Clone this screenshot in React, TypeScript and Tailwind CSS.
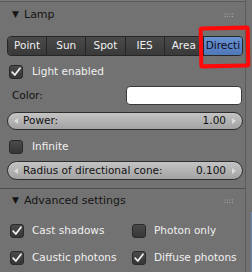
import React from "react";

const font = { fontFamily: '"DejaVu Sans", "Liberation Sans", sans-serif' };

function Check({ checked }: { checked: boolean }) {
  return (
    <div className="w-[14px] h-[14px] rounded-[3px] border border-[#2a2a2a] bg-gradient-to-b from-[#4a4a4a] to-[#363636] flex items-center justify-center shrink-0">
      {checked && (
        <svg width="12" height="12" viewBox="0 0 12 12">
          <path d="M2.2 6.2 L4.8 9 L10 2.2" stroke="#f0f0f0" strokeWidth="1.8" fill="none" strokeLinecap="round" strokeLinejoin="round" />
        </svg>
      )}
    </div>
  );
}

function Grip() {
  return (
    <svg width="10" height="5" viewBox="0 0 10 5">
      {[0, 1].map((r) =>
        [0, 1, 2, 3].map((c) => (
          <rect key={`${r}-${c}`} x={c * 2.5 + 0.5} y={r * 2.5 + 0.5} width="1" height="1" fill="#a8a8a8" />
        ))
      )}
    </svg>
  );
}

function Slider({ label, value }: { label: string; value: string }) {
  return (
    <div className="h-full rounded-full border border-[#2e2e2e] bg-gradient-to-b from-[#c4c4c4] to-[#a2a2a2] flex items-center px-[6px] text-[10.5px] text-[#111]">
      <svg width="4" height="6" viewBox="0 0 4 6" className="mr-[5px]">
        <path d="M4 0 L0 3 L4 6 Z" fill="#dcdcdc" />
      </svg>
      <span>{label}</span>
      <span className="ml-auto mr-[6px]">{value}</span>
      <svg width="4" height="6" viewBox="0 0 4 6">
        <path d="M0 0 L4 3 L0 6 Z" fill="#dcdcdc" />
      </svg>
    </div>
  );
}

const tabs = ["Point", "Sun", "Spot", "IES", "Area", "Directi"];

export default function App() {
  return (
    <div className="w-[252px] h-[272px] bg-[#727272] relative overflow-hidden flex" style={font}>
      <div className="w-[246px] h-full border-r border-[#5c5c5c] flex flex-col">
        <div className="h-[1px] bg-[#7a7a7a]" />
        <div className="h-[1px] bg-[#585858]" />
        {/* Header */}
        <div className="h-[26px] flex items-center pl-[12px] pr-[11px] text-[11px] text-[#151515]">
          <span className="text-[9px] w-[12px]">▼</span>
          <span>Lamp</span>
          <span className="ml-auto"><Grip /></span>
        </div>
        {/* Tabs */}
        <div className="mt-[8px] mx-[7px] w-[236px] h-[20px] flex rounded-[4px] border border-[#262626] overflow-hidden">
          {tabs.map((t, i) => (
            <div
              key={t}
              className={`flex-1 flex items-center justify-center text-[10.5px] overflow-hidden whitespace-nowrap ${
                i > 0 ? "border-l border-[#262626]" : ""
              } ${
                t === "Directi"
                  ? "bg-gradient-to-b from-[#6a93d2] to-[#5078b8] text-[#0e0e1e]"
                  : "bg-gradient-to-b from-[#4a4a4a] to-[#393939] text-[#f0f0f0]"
              }`}
            >
              {t}
            </div>
          ))}
        </div>
        {/* Light enabled */}
        <div className="mt-[9px] h-[14px] flex items-center pl-[9px] gap-[9px] text-[10.5px] text-[#f0f0f0]">
          <Check checked />
          <span>Light enabled</span>
        </div>
        {/* Color */}
        <div className="mt-[7px] h-[19px] flex items-center pl-[12px] text-[10.5px] text-[#111]">
          <span className="w-[114px]">Color:</span>
          <div className="w-[116px] h-full rounded-[4px] border border-[#3a3a3a] bg-white" />
        </div>
        {/* Power */}
        <div className="mt-[7px] h-[18px] mx-[7px] w-[236px]">
          <Slider label="Power:" value="1.00" />
        </div>
        {/* Infinite */}
        <div className="mt-[10px] h-[14px] flex items-center pl-[9px] gap-[9px] text-[10.5px] text-[#f0f0f0]">
          <Check checked={false} />
          <span>Infinite</span>
        </div>
        {/* Radius */}
        <div className="mt-[7px] h-[19px] mx-[7px] w-[236px]">
          <Slider label="Radius of directional cone:" value="0.100" />
        </div>
        {/* Separator */}
        <div className="mt-[8px] h-[1px] bg-[#4e4e4e]" />
        {/* Advanced header */}
        <div className="h-[24px] flex items-center pl-[12px] pr-[11px] text-[11px] text-[#151515]">
          <span className="text-[9px] w-[12px]">▼</span>
          <span>Advanced settings</span>
          <span className="ml-auto"><Grip /></span>
        </div>
        {/* Checkbox grid */}
        <div className="mt-[11px] grid grid-cols-[123px_1fr] gap-y-[13px] text-[10.5px] text-[#f0f0f0]">
          <div className="h-[14px] flex items-center pl-[10px] gap-[8px]">
            <Check checked />
            <span>Cast shadows</span>
          </div>
          <div className="h-[14px] flex items-center pl-[9px] gap-[8px]">
            <Check checked={false} />
            <span>Photon only</span>
          </div>
          <div className="h-[14px] flex items-center pl-[10px] gap-[8px]">
            <Check checked />
            <span>Caustic photons</span>
          </div>
          <div className="h-[14px] flex items-center pl-[9px] gap-[8px]">
            <Check checked />
            <span>Diffuse photons</span>
          </div>
        </div>
      </div>
      <div className="flex-1 flex flex-col items-end">
        <div className="h-[212px]" />
        <div className="w-[1px] flex-1 bg-[#6d86b0]" />
      </div>
      {/* Red annotation */}
      <div className="absolute left-[199px] top-[26px] w-[51px] h-[42px] border-[4px] border-[#ff0a0a] rounded-[3px] -rotate-1" />
    </div>
  );
}
